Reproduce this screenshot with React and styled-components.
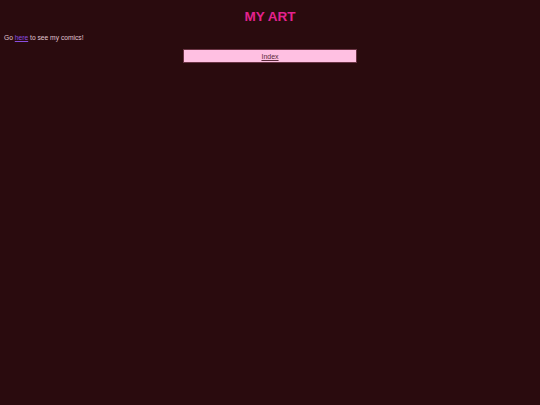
import React from 'react';
import styled, { createGlobalStyle } from 'styled-components';

const GlobalStyle = createGlobalStyle`
  html, body {
    margin: 0;
    padding: 0;
    background: #2a0b0e;
  }
  body {
    font-family: "Liberation Sans", Arial, sans-serif;
  }
`;

const Page = styled.div`
  padding: 9px 4px;
  color: #e8c8d4;
`;

const Title = styled.h1`
  margin: 0;
  text-align: center;
  font-size: 13.5px;
  font-weight: bold;
  color: #e4228e;
  line-height: 16px;
`;

const Intro = styled.p`
  margin: 9px 0 0;
  font-size: 6.7px;
  line-height: 8px;
  color: #e0c4d0;
`;

const Link = styled.a`
  color: #8a4ee0;
  text-decoration: underline;
`;

const NavBox = styled.div`
  margin: 7px auto 0;
  width: 172px;
  height: 12px;
  border: 1px solid #6a3444;
  background: #ffc0e2;
  display: flex;
  align-items: center;
  justify-content: center;
`;

const NavLink = styled.a`
  font-size: 7px;
  color: #5a2838;
  text-decoration: underline;
`;

export default function App() {
  return (
    <>
      <GlobalStyle />
      <Page>
        <Title>MY ART</Title>
        <Intro>
          Go <Link href="#">here</Link> to see my comics!
        </Intro>
        <NavBox>
          <NavLink href="#">Index</NavLink>
        </NavBox>
      </Page>
    </>
  );
}
